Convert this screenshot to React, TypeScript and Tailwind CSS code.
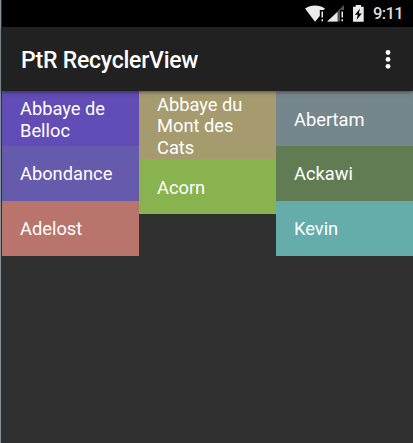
type Cheese = { name: string; cell: string };

const columns: Cheese[][] = [
  [
    { name: 'Abbaye de Belloc', cell: 'h-[55px] pt-[2px] bg-[#624cb5]' },
    { name: 'Abondance', cell: 'h-[55px] bg-[#665aad]' },
    { name: 'Adelost', cell: 'h-[55px] bg-[#b9756b]' },
  ],
  [
    { name: 'Abbaye du Mont des Cats', cell: 'h-[68px] pt-[2px] bg-[#a69b6f]' },
    { name: 'Acorn', cell: 'h-[55px] pt-[2px] bg-[#89b34e]' },
  ],
  [
    { name: 'Abertam', cell: 'h-[55px] pt-[2px] bg-[#76868d]' },
    { name: 'Ackawi', cell: 'h-[55px] bg-[#617b53]' },
    { name: 'Kevin', cell: 'h-[55px] bg-[#64adab]' },
  ],
];

function StatusBar() {
  return (
    <div className="flex h-[27px] shrink-0 items-center justify-end bg-black pr-[10px]">
      <svg width="67" height="20" viewBox="0 0 67 20" className="mr-px shrink-0">
        <path d="M0 4.6C5.8.3 14.2.3 20 4.6L18.6 6H14.8v6L10 17.8Z" fill="#ebebeb" />
        <path d="M16.5 7.5H18v6h-1.5zM16.5 15.3H18v2h-1.5z" fill="#ebebeb" />
        <path d="M39 1v5H35v11.5H22.2Z" fill="#555" />
        <path d="M32.5 8v9.5H22.2Z" fill="#ebebeb" />
        <path d="M36.5 7.5H38v6h-1.5zM36.5 15.3H38v2h-1.5z" fill="#ebebeb" />
        <path d="M50.7 1H56v1.7h2.7v15H48v-15h2.7Z" fill="#ebebeb" />
        <path d="M55 4.6 50 10.8h2.8l-1.2 5.2 5.2-6.5h-3Z" fill="#000" />
      </svg>
      <span className="w-[30px] pt-px text-[16.5px] leading-[26px] font-medium tracking-[-0.6px] whitespace-nowrap text-[#dedede]">
        9:11
      </span>
    </div>
  );
}

function AppBar() {
  return (
    <header className="relative z-10 flex h-16 shrink-0 items-center justify-between bg-[#212121] pr-[21px] pl-[19px] shadow-[0_1px_4px_rgba(0,0,0,0.5)]">
      <h1 className="pt-[3px] text-[23px] leading-7 font-medium tracking-[-0.24px] text-white">
        PtR RecyclerView
      </h1>
      <svg width="8" height="24" viewBox="0 0 8 24" fill="#fff">
        <circle cx="4" cy="5.5" r="2.4" />
        <circle cx="4" cy="12.4" r="2.4" />
        <circle cx="4" cy="19.3" r="2.4" />
      </svg>
    </header>
  );
}

export default function App() {
  return (
    <div className="flex h-[443px] w-[413px] overflow-hidden bg-[#303030] font-['Roboto',sans-serif]">
      <div className="w-[2px] shrink-0 border-l border-[#86949a] bg-[#263238]" />
      <div className="flex min-w-0 flex-1 flex-col">
        <StatusBar />
        <AppBar />
        <main className="grid grid-cols-3 items-start">
          {columns.map((cheeses, i) => (
            <div key={i} className="flex flex-col">
              {cheeses.map(({ name, cell }) => (
                <div key={name} className={`flex items-center pr-4 pl-[18px] ${cell}`}>
                  <span className="text-[18.3px] leading-[21.5px] text-white">{name}</span>
                </div>
              ))}
            </div>
          ))}
        </main>
      </div>
    </div>
  );
}
